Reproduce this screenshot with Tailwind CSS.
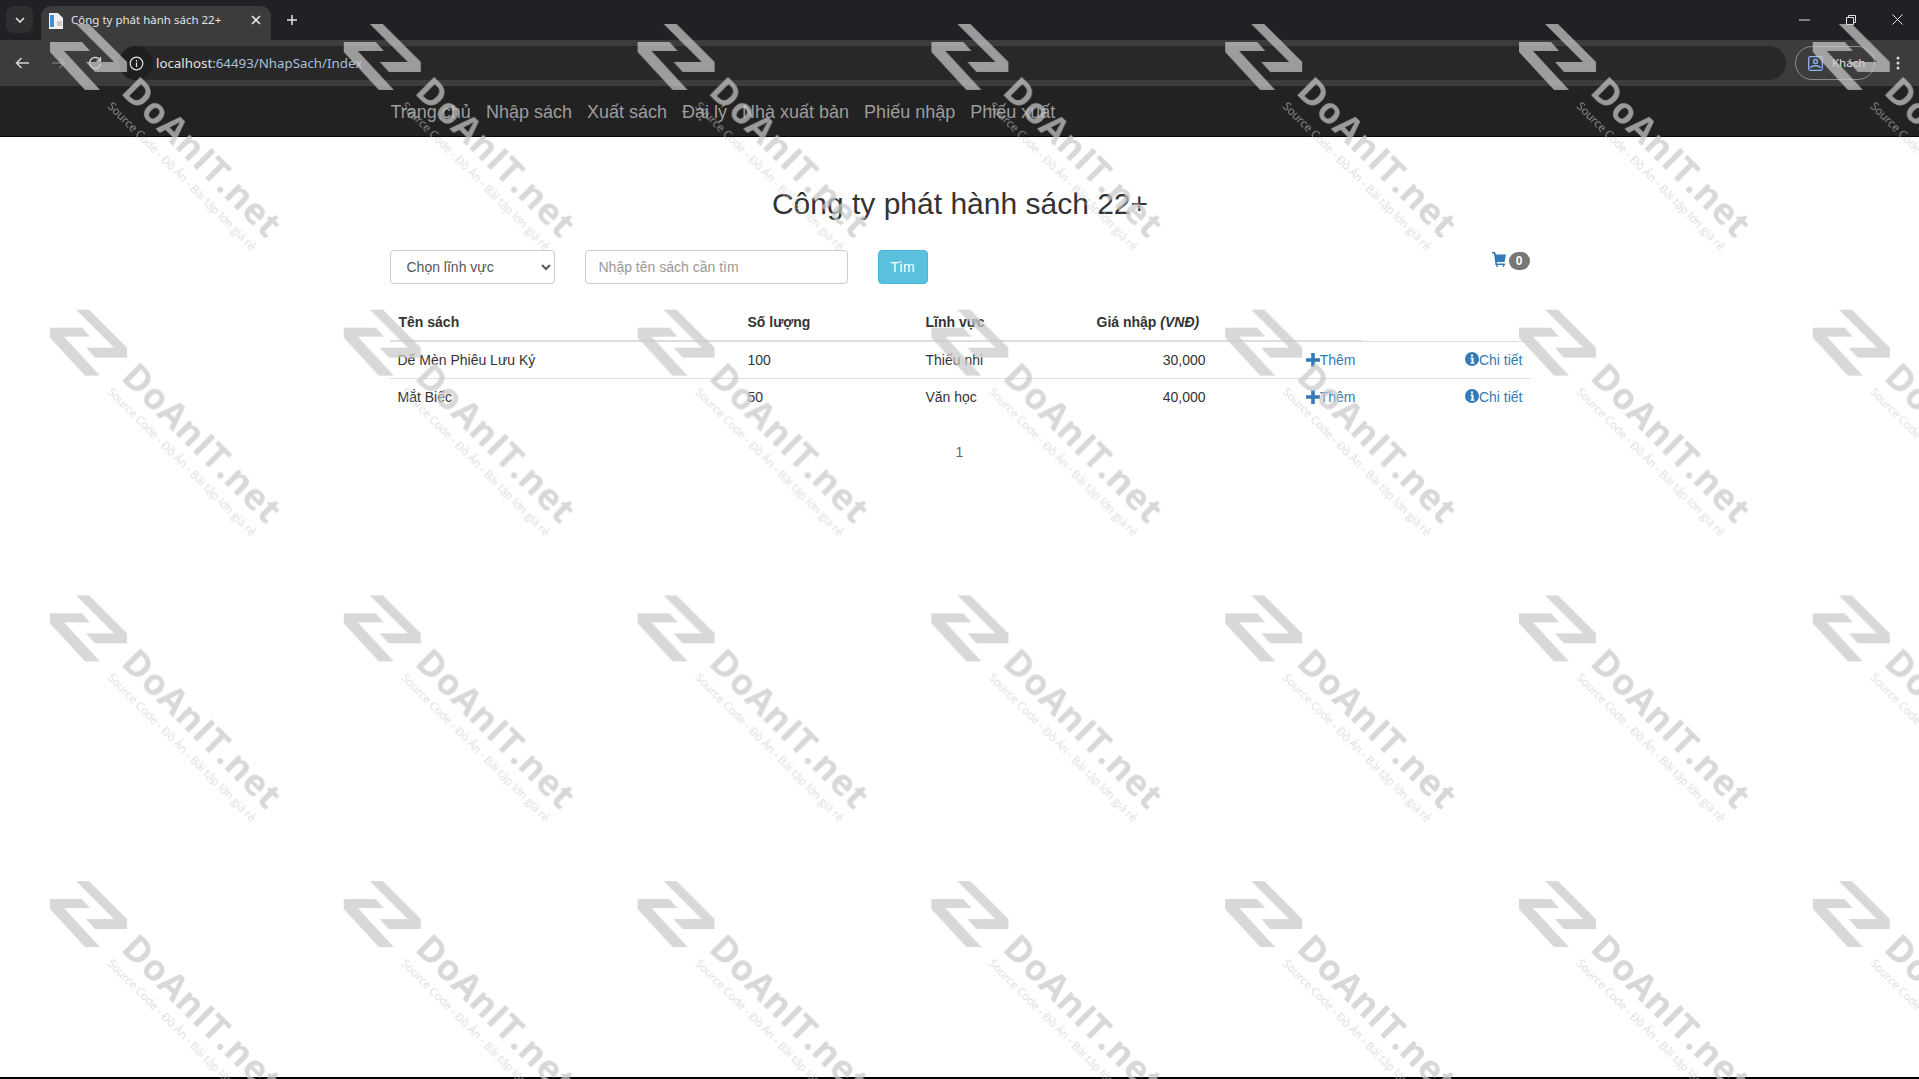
<!DOCTYPE html>
<html lang="vi">
<head>
<meta charset="utf-8">
<title>Công ty phát hành sách 22+</title>
<script src="https://cdn.jsdelivr.net/npm/@tailwindcss/browser@4"></script>
</head>
<body class="relative h-[1079px] w-full overflow-hidden bg-white font-['Liberation_Sans',Arial,sans-serif] text-[14px] leading-[20px] text-[#333]">
<div class="flex h-[1079px] flex-col border-b-2 border-black">

  <!-- browser tab strip -->
  <div class="flex h-[40px] shrink-0 items-end bg-[#202124] pl-[6px] font-['Noto_Sans',sans-serif] text-[#e3e3e3]">
    <div class="mb-[7px] flex h-[27px] w-[27px] items-center justify-center rounded-[8px] bg-[#2e2f30]">
      <svg width="10" height="6" viewBox="0 0 10 6" fill="none" stroke="#e3e3e3" stroke-width="1.6"><path d="M1 1l4 4 4-4"/></svg>
    </div>
    <div class="ml-[8px] flex h-[34px] w-[230px] items-start rounded-t-[10px] bg-[#3c3c3c] pl-[7px] pr-[10px] pt-[6px]">
      <svg width="16" height="18" viewBox="0 0 16 18"><path d="M1 1h9l5 5v11H1z" fill="#f1f1f1"/><path d="M2 3h4v12H2z" fill="#3f8fd6"/><path d="M9 9h5v5H9z" fill="#c9c9c9"/></svg>
      <span class="ml-[7px] flex-1 whitespace-nowrap text-[11.5px] leading-[16px]">Công ty phát hành sách 22+</span>
      <svg class="mt-[3px]" width="10" height="10" viewBox="0 0 10 10" stroke="#e3e3e3" stroke-width="1.6"><path d="M1 1l8 8M9 1l-8 8"/></svg>
    </div>
    <svg class="mb-[14px] ml-[15px]" width="12" height="12" viewBox="0 0 12 12" stroke="#e3e3e3" stroke-width="1.5"><path d="M6 1v10M1 6h10"/></svg>
    <div class="ml-auto mb-[15px] flex items-center gap-[36px] pr-[16px]">
      <svg width="11" height="2" viewBox="0 0 11 2" stroke="#e3e3e3"><path d="M0 1h11"/></svg>
      <svg width="10" height="10" viewBox="0 0 10 10" fill="none" stroke="#e3e3e3"><path d="M.5 2.5h7v7h-7zM2.5 2.5v-2h7v7h-2"/></svg>
      <svg width="11" height="11" viewBox="0 0 11 11" stroke="#e3e3e3"><path d="M.5.5l10 10M10.5.5l-10 10"/></svg>
    </div>
  </div>

  <!-- browser toolbar -->
  <div class="flex h-[46px] shrink-0 items-center bg-[#3c3c3c] pl-[15px] pr-[19px] font-['Noto_Sans',sans-serif]">
    <svg width="14" height="12" viewBox="0 0 14 12" fill="none" stroke="#d5d5d5" stroke-width="1.5"><path d="M14 6H2M6.5 1L1.5 6l5 5"/></svg>
    <svg class="ml-[23px]" width="14" height="12" viewBox="0 0 14 12" fill="none" stroke="#6f6f6f" stroke-width="1.5"><path d="M0 6h12M7.5 1l5 5-5 5"/></svg>
    <svg class="ml-[22px]" width="14" height="14" viewBox="0 0 14 14" fill="none" stroke="#d5d5d5" stroke-width="1.4"><path d="M12 4.500A5.500 5.500 0 1 0 12.500 8M12.500 1v4h-4"/></svg>
    <div class="ml-[17px] flex h-[34px] flex-1 items-center rounded-full bg-[#282828] pr-[10px]">
      <div class="flex h-[34px] w-[34px] shrink-0 items-center justify-center rounded-full bg-[#1f1f1f]">
        <svg width="15" height="15" viewBox="0 0 15 15" fill="none" stroke="#e3e3e3" stroke-width="1.2"><circle cx="7.500" cy="7.500" r="6.300"/><path d="M7.500 6.500v4.500M7.500 4v1.400"/></svg>
      </div>
      <span class="ml-[3px] whitespace-nowrap text-[13.300px] text-[#a9c0dc]"><span class="text-[#e3e3e3]">localhost</span>:64493/NhapSach/Index</span>
    </div>
    <div class="ml-[9px] flex h-[34px] w-[80px] items-center rounded-full border border-[#8a8a8a] pl-[12px] text-[11.500px] text-[#e3e3e3]">
      <svg width="15" height="15" viewBox="0 0 15 15" fill="none" stroke="#8ab4f8" stroke-width="1.300"><rect x=".7" y=".7" width="13.600" height="13.600" rx="1.500"/><circle cx="7.500" cy="5.500" r="2"/><path d="M2.500 12c1-3 9-3 10 0"/></svg>
      <span class="ml-[9px]">Khách</span>
    </div>
    <svg class="ml-[21px]" width="4" height="14" viewBox="0 0 4 14" fill="#d5d5d5"><circle cx="2" cy="2" r="1.500"/><circle cx="2" cy="7" r="1.500"/><circle cx="2" cy="12" r="1.500"/></svg>
  </div>

  <!-- site navbar -->
  <nav class="h-[51px] shrink-0 border-b border-[#080808] bg-[#222]">
    <ul class="mx-auto flex h-[51px] w-[1140px] items-center gap-[15px] pl-[1px] text-[18px] text-[#9d9d9d]">
      <li><a href="#">Trang chủ</a></li>
      <li><a href="#">Nhập sách</a></li>
      <li><a href="#">Xuất sách</a></li>
      <li><a href="#">Đại lý</a></li>
      <li><a href="#">Nhà xuất bản</a></li>
      <li><a href="#">Phiếu nhập</a></li>
      <li><a href="#">Phiếu xuất</a></li>
    </ul>
  </nav>

  <!-- page content -->
  <main class="mx-auto w-[1140px]">
    <h1 class="mt-[50px] h-[33px] pl-[1px] text-center text-[30px] leading-[33px] font-normal">Công ty phát hành sách 22+</h1>

    <div class="mt-[30px] flex h-[34px] items-start">
      <select class="h-[34px] w-[165px] rounded-[4px] border border-[#ccc] bg-white px-[12px] text-[14px] text-[#555]">
        <option>Chọn lĩnh vực</option>
      </select>
      <input class="ml-[30px] h-[34px] w-[263px] rounded-[4px] border border-[#ccc] bg-white pl-[13px] pr-[12px] text-[14px] text-[#555] placeholder:text-[#999]" placeholder="Nhập tên sách cần tìm">
      <button class="ml-[30px] h-[34px] w-[50px] rounded-[4px] border border-[#46b8da] bg-[#5bc0de] text-[14px] text-white">Tìm</button>
      <a href="#" class="ml-auto mt-[2px] flex items-start gap-[3px]">
        <svg width="14" height="15" viewBox="0 0 14 15" fill="#337ab7"><path d="M0 0h3l1 2.500h10L12.500 10H5L4.700 11.500H13V13H3.500L2 1.500H0z"/><circle cx="5" cy="14" r="1"/><circle cx="11.500" cy="14" r="1"/></svg>
        <span class="flex h-[18px] w-[21px] items-center justify-center rounded-full bg-[#777] text-[12px] font-bold text-white">0</span>
      </a>
    </div>

    <table class="mt-[20px] w-[1140px] table-fixed border-separate border-spacing-0 text-left">
      <colgroup>
        <col class="w-[351px]"><col class="w-[177px]"><col class="w-[172px]"><col class="w-[123px]"><col class="w-[149px]"><col class="w-[168px]">
      </colgroup>
      <thead>
        <tr class="h-[38px]">
          <th class="border-b-2 border-[#ddd] pl-[9px]">Tên sách</th>
          <th class="border-b-2 border-[#ddd] px-[7px]">Số lượng</th>
          <th class="border-b-2 border-[#ddd] px-[8px]">Lĩnh vực</th>
          <th class="border-b-2 border-[#ddd] px-[7px] whitespace-nowrap">Giá nhập <em>(VNĐ)</em></th>
          <th class="border-b-2 border-[#ddd]"></th>
          <th class="border-b border-[#ddd]"></th>
        </tr>
      </thead>
      <tbody>
        <tr class="h-[37px]">
          <td class="border-b border-[#ddd] pl-[8px]">Dế Mèn Phiêu Lưu Ký</td>
          <td class="border-b border-[#ddd] px-[7px]">100</td>
          <td class="border-b border-[#ddd] px-[8px]">Thiếu nhi</td>
          <td class="border-b border-[#ddd] px-[7px] text-right">30,000</td>
          <td class="border-b border-[#ddd] pr-[6px] text-right"><a href="#" class="text-[#337ab7]"><svg class="inline-block align-[-2px]" width="14" height="14" viewBox="0 0 14 14" fill="#337ab7"><path d="M5.200 0h3.600v5.200H14v3.600H8.800V14H5.200V8.800H0V5.200h5.200z"/></svg>Thêm</a></td>
          <td class="border-b border-[#ddd] px-[7px] text-right"><a href="#" class="text-[#337ab7]"><svg class="inline-block align-[-1px]" width="14" height="14" viewBox="0 0 14 14"><circle cx="7" cy="7" r="7" fill="#337ab7"/><path d="M5.500 5.500h3v5h1v1.200h-4v-1.200h1V6.700h-1zM6 2.500h2v2H6z" fill="#fff"/></svg>Chi tiết</a></td>
        </tr>
        <tr class="h-[36px]">
          <td class="pl-[8px]">Mắt Biếc</td>
          <td class="px-[7px]">50</td>
          <td class="px-[8px]">Văn học</td>
          <td class="px-[7px] text-right">40,000</td>
          <td class="pr-[6px] text-right"><a href="#" class="text-[#337ab7]"><svg class="inline-block align-[-2px]" width="14" height="14" viewBox="0 0 14 14" fill="#337ab7"><path d="M5.200 0h3.600v5.200H14v3.600H8.800V14H5.200V8.800H0V5.200h5.200z"/></svg>Thêm</a></td>
          <td class="px-[7px] text-right"><a href="#" class="text-[#337ab7]"><svg class="inline-block align-[-1px]" width="14" height="14" viewBox="0 0 14 14"><circle cx="7" cy="7" r="7" fill="#337ab7"/><path d="M5.500 5.500h3v5h1v1.200h-4v-1.200h1V6.700h-1zM6 2.500h2v2H6z" fill="#fff"/></svg>Chi tiết</a></td>
        </tr>
      </tbody>
    </table>

    <div class="mt-[27px] text-center text-[14px] text-[#666]">1</div>
  </main>
</div>

<!-- repeating watermark laid over the whole screenshot -->
<svg class="pointer-events-none absolute inset-0 z-10" width="1919" height="1079" xmlns="http://www.w3.org/2000/svg">
  <defs>
    <pattern id="wm" x="0" y="24" width="293.800" height="285.700" patternUnits="userSpaceOnUse">
      <g fill="#c9c9c9" fill-opacity="0.72">
        <path d="M76 0H89L127 38V48H95L86 38H114z"/>
        <path d="M50 18H82L90 27H64L100 66H85L50 28z"/>
        <text transform="translate(120 69) rotate(45)" font-family="Open Sans, sans-serif" font-weight="700" font-size="36" textLength="207" lengthAdjust="spacing">DoAnIT.net</text>
        <text transform="translate(107 83) rotate(45)" font-family="Open Sans, sans-serif" font-size="11.500" fill-opacity="0.65" textLength="204" lengthAdjust="spacing">Source Code - Đồ Án - Bài tập lớn giá rẻ</text>
      </g>
    </pattern>
  </defs>
  <rect width="1919" height="1079" fill="url(#wm)"/>
</svg>
</body>
</html>
